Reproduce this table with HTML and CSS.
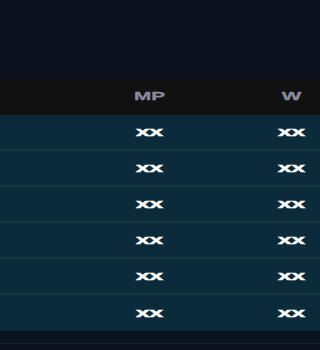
FILE: index.html
```html
<!DOCTYPE html>
<html>
<head>
<meta charset="utf-8">
<link rel="stylesheet" href="styles.css">
</head>
<body>
<div class="page">
  <div class="top"></div>
  <div class="table">
    <div class="row head">
      <div class="cell"></div>
      <div class="cell"><span class="wide">MP</span></div>
      <div class="cell"></div>
      <div class="cell"><span class="wide">W</span></div>
    </div>
    <div class="row body"><div class="cell"></div><div class="cell"><span class="wide val">xx</span></div><div class="cell"></div><div class="cell"><span class="wide val">xx</span></div></div>
    <div class="row body"><div class="cell"></div><div class="cell"><span class="wide val">xx</span></div><div class="cell"></div><div class="cell"><span class="wide val">xx</span></div></div>
    <div class="row body"><div class="cell"></div><div class="cell"><span class="wide val">xx</span></div><div class="cell"></div><div class="cell"><span class="wide val">xx</span></div></div>
    <div class="row body"><div class="cell"></div><div class="cell"><span class="wide val">xx</span></div><div class="cell"></div><div class="cell"><span class="wide val">xx</span></div></div>
    <div class="row body"><div class="cell"></div><div class="cell"><span class="wide val">xx</span></div><div class="cell"></div><div class="cell"><span class="wide val">xx</span></div></div>
    <div class="row body last"><div class="cell"></div><div class="cell"><span class="wide val">xx</span></div><div class="cell"></div><div class="cell"><span class="wide val">xx</span></div></div>
  </div>
  <div class="foot"></div>
</div>
</body>
</html>
```
FILE: styles.css
```css
html, body {
  margin: 0;
  padding: 0;
  background: #0c1220;
  font-family: "Liberation Sans", Arial, sans-serif;
}
.page {
  width: 320px;
  height: 350px;
  overflow: hidden;
  background: #0c1220;
}
.top {
  height: 79px;
  background: #0c1220;
}
.row {
  display: grid;
  grid-template-columns: 121px 58px 84px 57px;
  align-items: center;
}
.cell {
  display: flex;
  justify-content: center;
  align-items: center;
}
.head {
  height: 36px;
  background: #111111;
}
.head .wide {
  color: #8a8a9e;
  font-size: 11.5px;
  font-weight: 700;
  -webkit-text-stroke: 0.3px #8a8a9e;
  margin-top: -1px;
}
.body {
  height: 34px;
  background: #0b2a3a;
  border-bottom: 2px solid #143442;
}
.body.last {
  border-bottom: none;
  height: 36px;
}
.wide {
  display: inline-block;
  transform: scaleX(1.8);
  line-height: 1;
}
.val {
  color: #ffffff;
  font-size: 13.5px;
  font-weight: 700;
  -webkit-text-stroke: 0.5px #ffffff;
  margin-top: 0;
}
.foot {
  height: 12px;
  background: #0b1220;
  border-bottom: 1px solid #16222e;
}
```
